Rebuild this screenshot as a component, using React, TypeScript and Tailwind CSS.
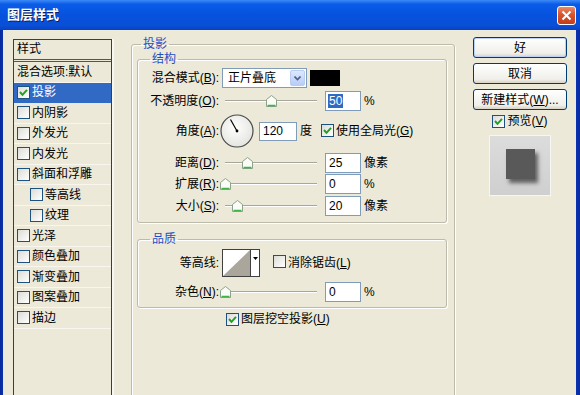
/* Photoshop "图层样式" (Layer Style) dialog — Drop Shadow page, XP Luna chrome. */

import React from "react";

function Check({ checked }: { checked?: boolean }) {
  return (
    <span className="inline-flex h-[13px] w-[13px] shrink-0 items-center justify-center border border-[#1c5180] bg-[linear-gradient(135deg,#dcdcd6,#ffffff)]">
      {checked && (
        <svg width="9" height="9" viewBox="0 0 9 9">
          <path d="M1 4 L3.5 6.8 L8 1.8" fill="none" stroke="#21a121" strokeWidth="2" />
        </svg>
      )}
    </span>
  );
}

function Slider({ at }: { at: number }) {
  return (
    <div className="relative h-[20px] w-[100px] shrink-0">
      <div className="absolute left-[5px] right-[3px] top-[9px] h-[2px] border-t border-b border-t-[#a7a69c] border-b-white" />
      <svg className="absolute top-[4px]" style={{ left: at - 5 }} width="11" height="12" viewBox="0 0 11 12">
        <path d="M0.5 4.5 L5.5 0.5 L10.5 4.5 V11.5 H0.5 Z" fill="#fbfbf8" stroke="#8aa38a" />
        <path d="M1.5 10.5 H9.5" stroke="#3fb24a" strokeWidth="1.5" />
      </svg>
    </div>
  );
}

function Label({ children }: { children: React.ReactNode }) {
  return <span className="w-[82px] shrink-0 pr-[1px] text-right">{children}</span>;
}

export default function App() {
  const items = [
    { label: "投影", checked: true, selected: true },
    { label: "内阴影" },
    { label: "外发光" },
    { label: "内发光" },
    { label: "斜面和浮雕" },
    { label: "等高线", indent: true },
    { label: "纹理", indent: true },
    { label: "光泽" },
    { label: "颜色叠加" },
    { label: "渐变叠加" },
    { label: "图案叠加" },
    { label: "描边" },
  ];

  return (
    <div className="flex h-[395px] w-[580px] flex-col overflow-hidden bg-[linear-gradient(90deg,#0a2a9e,#0842d0_2%,#0842d0_98%,#0a2a9e)] font-['Liberation_Sans','Noto_Sans_CJK_SC',sans-serif] text-[12px] leading-[14px] text-black">
      {/* Title bar */}
      <div className="flex h-[30px] shrink-0 items-center justify-between bg-[linear-gradient(180deg,#3d8af7_0%,#0a5ce8_14%,#0652de_50%,#0a4fd6_85%,#0842c4_100%)] pl-[7px] pr-[4px]">
        <span className="text-[13px] font-bold text-white [text-shadow:1px_1px_#0a1e6a]">图层样式</span>
        <div className="flex h-[19px] w-[19px] items-center justify-center rounded-[3px] border border-white bg-[linear-gradient(180deg,#e98a68,#d9532c_45%,#c23e1b)]">
          <svg width="11" height="11" viewBox="0 0 11 11">
            <path d="M1.5 1.5 L9.5 9.5 M9.5 1.5 L1.5 9.5" stroke="#fff" strokeWidth="2" />
          </svg>
        </div>
      </div>

      {/* Body */}
      <div className="ml-[3px] mr-[4px] flex flex-1 items-start bg-[#ece9d8] pl-[10px] pr-[9px] pt-[7px]">
        {/* Style list */}
        <div className="mt-[2px] flex h-[380px] w-[99px] shrink-0 flex-col border border-[#3d3d3d] shadow-[2px_0_0_#f8f7f2]">
          <div className="flex h-[22px] shrink-0 items-start border-b-[3px] border-double border-[#555] pl-[3px] pt-[2px]">样式</div>
          <div className="flex h-[20.5px] shrink-0 items-center border-b border-[#f8f6ef] pl-[3px]">混合选项:默认</div>
          {items.map((it) => (
            <div
              key={it.label}
              className={
                "flex h-[20.5px] shrink-0 items-center gap-[2px] border-b " +
                (it.selected ? "border-[#316ac5] bg-[#316ac5] text-white " : "border-[#f8f6ef] ") +
                (it.indent ? "pl-[16px]" : "pl-[3px]")
              }
            >
              <Check checked={it.checked} />
              <span>{it.label}</span>
            </div>
          ))}
        </div>

        {/* Drop shadow group */}
        <fieldset className="ml-[19px] h-[380px] w-[324px] shrink-0 rounded-[3px] border border-[#bdbaab] pl-[5px] pr-[7px] shadow-[1px_1px_0_#fff,inset_1px_1px_0_#fff]">
          <legend className="ml-[4px] px-[2px] leading-[14px] text-[#1f4fc2]">投影</legend>

          {/* 结构 */}
          <fieldset className="mt-[1px] w-[310px] rounded-[3px] border border-[#bdbaab] pb-[6px] shadow-[1px_1px_0_#fff,inset_1px_1px_0_#fff]">
            <legend className="ml-[12px] px-[2px] leading-[14px] text-[#1f4fc2]">结构</legend>

            <div className="mt-[2px] flex h-[20px] items-center">
              <Label>混合模式(<u>B</u>):</Label>
              <div className="ml-[2px] flex h-[20px] w-[85px] items-center justify-between border border-[#7f9db9] bg-white pl-[5px] pr-[1px]">
                <span>正片叠底</span>
                <div className="flex h-[16px] w-[15px] items-center justify-center rounded-[2px] border border-[#b9ccf1] bg-[linear-gradient(180deg,#dfe8fd,#b6cdf8)]">
                  <svg width="7" height="5" viewBox="0 0 7 5">
                    <path d="M0.5 0.5 L3.5 3.5 L6.5 0.5" fill="none" stroke="#4d6185" strokeWidth="1.6" />
                  </svg>
                </div>
              </div>
              <div className="ml-[3px] h-[16px] w-[30px] bg-black" />
            </div>

            <div className="mt-[3px] flex h-[20px] items-center">
              <Label>不透明度(<u>O</u>):</Label>
              <Slider at={51} />
              <div className="ml-[5px] flex h-[20px] w-[36px] items-center border border-[#7f9db9] bg-white pl-[2px]">
                <span className="bg-[#316ac5] px-[1px] text-white">50</span>
              </div>
              <span className="ml-[3px]">%</span>
            </div>

            <div className="mt-[3px] flex h-[34px] items-center">
              <Label>角度(<u>A</u>):</Label>
              <svg width="34" height="34" viewBox="0 0 34 34" className="shrink-0">
                <defs>
                  <radialGradient id="dial" cx="45%" cy="40%" r="60%">
                    <stop offset="0%" stopColor="#ffffff" />
                    <stop offset="100%" stopColor="#e4e4e0" />
                  </radialGradient>
                </defs>
                <circle cx="17" cy="17" r="16" fill="url(#dial)" stroke="#4a4a4a" strokeWidth="1.2" />
                <path d="M17 17 L10.5 5.5" stroke="#000" strokeWidth="1.2" />
                <circle cx="17" cy="17" r="1.4" fill="#000" />
              </svg>
              <div className="ml-[5px] flex h-[19px] w-[38px] items-center border border-[#7f9db9] bg-white pl-[3px]">120</div>
              <span className="ml-[3px]">度</span>
              <span className="ml-[9px]">
                <Check checked />
              </span>
              <span className="ml-[2px]">使用全局光(<u>G</u>)</span>
            </div>

            <div className="mt-[5px] flex h-[20px] items-center">
              <Label>距离(<u>D</u>):</Label>
              <Slider at={27} />
              <div className="ml-[5px] flex h-[20px] w-[36px] items-center border border-[#7f9db9] bg-white pl-[3px]">25</div>
              <span className="ml-[3px]">像素</span>
            </div>

            <div className="mt-[1px] flex h-[20px] items-center">
              <Label>扩展(<u>R</u>):</Label>
              <Slider at={5} />
              <div className="ml-[5px] flex h-[20px] w-[36px] items-center border border-[#7f9db9] bg-white pl-[3px]">0</div>
              <span className="ml-[3px]">%</span>
            </div>

            <div className="mt-[2px] flex h-[20px] items-center">
              <Label>大小(<u>S</u>):</Label>
              <Slider at={17} />
              <div className="ml-[5px] flex h-[20px] w-[36px] items-center border border-[#7f9db9] bg-white pl-[3px]">20</div>
              <span className="ml-[3px]">像素</span>
            </div>
          </fieldset>

          {/* 品质 */}
          <fieldset className="mt-[9px] w-[310px] rounded-[3px] border border-[#bdbaab] pb-[5px] shadow-[1px_1px_0_#fff,inset_1px_1px_0_#fff]">
            <legend className="ml-[12px] px-[2px] leading-[14px] text-[#1f4fc2]">品质</legend>

            <div className="mt-[3px] flex h-[28px] items-center">
              <Label>等高线:</Label>
              <svg width="38" height="28" viewBox="0 0 38 28" className="ml-[2px] shrink-0">
                <rect x="0.5" y="0.5" width="37" height="27" fill="#fff" stroke="#404040" />
                <path d="M1 27 L28 1 L28 27 Z" fill="#aaa69c" />
                <path d="M28.5 0 V28" stroke="#404040" />
                <path d="M31 8 L36 8 L33.5 11 Z" fill="#000" />
              </svg>
              <span className="ml-[13px]">
                <Check />
              </span>
              <span className="ml-[2px]">消除锯齿(<u>L</u>)</span>
            </div>

            <div className="mt-[5px] flex h-[20px] items-center">
              <Label>杂色(<u>N</u>):</Label>
              <Slider at={5} />
              <div className="ml-[5px] flex h-[20px] w-[36px] items-center border border-[#7f9db9] bg-white pl-[3px]">0</div>
              <span className="ml-[3px]">%</span>
            </div>
          </fieldset>

          <div className="ml-[89px] mt-[4px] flex h-[14px] items-center gap-[2px]">
            <Check checked />
            <span>图层挖空投影(<u>U</u>)</span>
          </div>
        </fieldset>

        {/* Buttons + preview */}
        <div className="ml-[18px] flex w-[94px] shrink-0 flex-col items-center">
          <button className="h-[21px] w-full rounded-[3px] border border-[#003c74] bg-[linear-gradient(180deg,#ffffff,#f0efea_80%,#d8d2c6)] shadow-[inset_0_0_0_1px_#bcd1f5]">好</button>
          <button className="mt-[5px] h-[21px] w-full rounded-[3px] border border-[#003c74] bg-[linear-gradient(180deg,#ffffff,#f0efea_80%,#d8d2c6)]">取消</button>
          <button className="mt-[5px] h-[21px] w-full rounded-[3px] border border-[#003c74] bg-[linear-gradient(180deg,#ffffff,#f0efea_80%,#d8d2c6)]">
            新建样式(<u>W</u>)...
          </button>
          <div className="mt-[4px] flex h-[14px] items-center gap-[2px]">
            <Check checked />
            <span>预览(<u>V</u>)</span>
          </div>
          <div className="mt-[7px] flex h-[61px] w-[62px] items-center justify-center border border-[#f6f6f4] bg-[linear-gradient(180deg,#dcdcdc,#cfcfcf)] pb-[3px]">
            <div className="h-[30px] w-[29px] bg-[#595959] shadow-[3px_4px_4px_rgba(0,0,0,0.55)]" />
          </div>
        </div>
      </div>
    </div>
  );
}
